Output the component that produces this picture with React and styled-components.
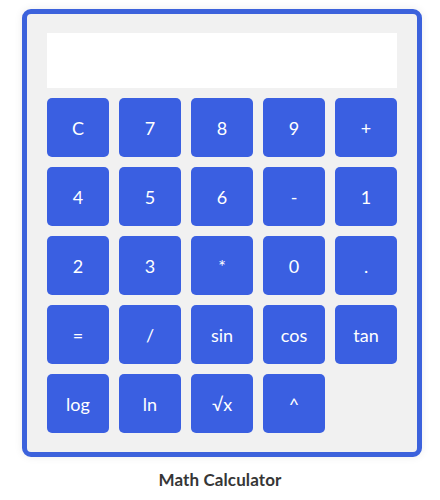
import React, { useState } from "react";
import styled, { createGlobalStyle } from "styled-components";

const GlobalStyle = createGlobalStyle`
  html, body {
    margin: 0;
    padding: 0;
    background: #ffffff;
  }
  body {
    font-family: "Lato", "Noto Sans", "Liberation Sans", sans-serif;
  }
`;

const Page = styled.main`
  display: flex;
  flex-direction: column;
  align-items: center;
  padding-top: 9px;
`;

const Card = styled.div`
  box-sizing: border-box;
  width: 400px;
  margin-left: 4px;
  padding: 19px 20px 19px 20px;
  background: #f1f1f1;
  border: 5px solid #3c62dc;
  border-radius: 9px;
  box-shadow: 0 0 8px rgba(0, 0, 0, 0.08);
  display: flex;
  flex-direction: column;
  gap: 10px;
`;

const Display = styled.input`
  box-sizing: border-box;
  width: 350px;
  height: 55px;
  border: none;
  outline: none;
  background: #ffffff;
  padding: 0 12px;
  font-family: inherit;
  font-size: 24px;
  text-align: right;
  color: #222;
`;

const Keypad = styled.div`
  display: grid;
  grid-template-columns: repeat(5, 62px);
  grid-auto-rows: 59px;
  column-gap: 10px;
  row-gap: 10px;
`;

const Key = styled.button`
  border: none;
  border-radius: 5px;
  background: #3a5fe1;
  color: #ffffff;
  font-family: "Lato", "Noto Sans", "Liberation Sans", sans-serif;
  font-size: 18px;
  font-weight: 400;
  cursor: pointer;
  padding: 0;
  display: flex;
  align-items: center;
  justify-content: center;
`;

const Title = styled.p`
  margin: 12px 0 0 0;
  font-size: 17px;
  font-weight: 700;
  color: #363636;
  letter-spacing: 0.1px;
`;

const keys = [
  "C", "7", "8", "9", "+",
  "4", "5", "6", "-", "1",
  "2", "3", "*", "0", ".",
  "=", "/", "sin", "cos", "tan",
  "log", "ln", "√x", "^",
];

export default function App() {
  const [value, setValue] = useState("");

  const press = (k) => {
    if (k === "C") return setValue("");
    if (k === "=") {
      try {
        const expr = value.replace(/\^/g, "**");
        // eslint-disable-next-line no-new-func
        setValue(String(Function(`"use strict";return (${expr})`)()));
      } catch {
        setValue("Error");
      }
      return;
    }
    const fn = {
      sin: Math.sin, cos: Math.cos, tan: Math.tan,
      log: Math.log10, ln: Math.log, "√x": Math.sqrt,
    }[k];
    if (fn) {
      const n = parseFloat(value);
      setValue(Number.isNaN(n) ? "Error" : String(fn(n)));
      return;
    }
    setValue((v) => v + k);
  };

  return (
    <Page>
      <GlobalStyle />
      <Card>
        <Display value={value} readOnly />
        <Keypad>
          {keys.map((k) => (
            <Key key={k} onClick={() => press(k)}>
              {k}
            </Key>
          ))}
        </Keypad>
      </Card>
      <Title>Math Calculator</Title>
    </Page>
  );
}
